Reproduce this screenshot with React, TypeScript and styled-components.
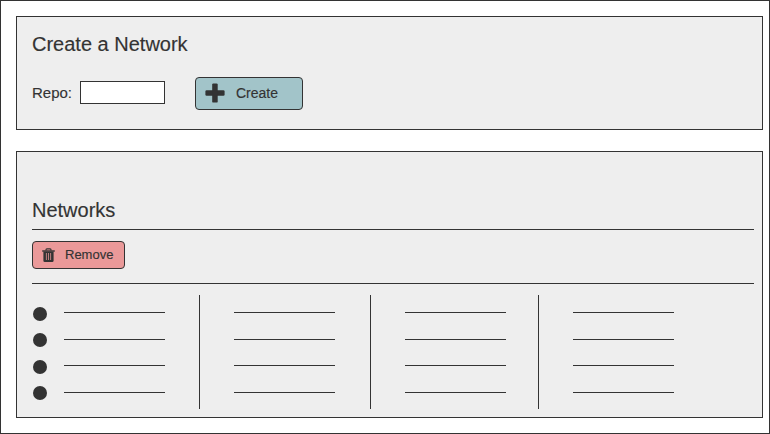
import React from "react";
import styled, { createGlobalStyle } from "styled-components";

const ink = "#333333";

const GlobalStyle = createGlobalStyle`
  *, *::before, *::after { box-sizing: border-box; }
  body { margin: 0; background: #ffffff; }
`;

const Page = styled.main`
  display: flex;
  flex-direction: column;
  gap: 21px;
  width: 770px;
  height: 434px;
  padding: 15px 6px 15px 15px;
  border: 1px solid ${ink};
  background: #ffffff;
  color: ${ink};
  font-family: "Liberation Sans", Arial, sans-serif;
  -webkit-text-stroke: 0.15px ${ink};
`;

const Panel = styled.section<{ $height: number; $top: number }>`
  flex: none;
  height: ${(p) => p.$height}px;
  padding: ${(p) => p.$top}px 8px 0 15px;
  border: 1px solid ${ink};
  background: #eeeeee;
`;

const Title = styled.h2`
  margin: 0;
  font-size: 20px;
  font-weight: 400;
  line-height: 24px;
`;

const Form = styled.form`
  display: flex;
  align-items: center;
  height: 33px;
  margin-top: 21px;
`;

const Label = styled.label`
  width: 48px;
  padding-bottom: 2px;
  font-size: 15px;
  line-height: 18px;
`;

const TextInput = styled.input`
  width: 85px;
  height: 23px;
  margin: 0 30px 2px 0;
  padding: 0 4px;
  border: 1px solid ${ink};
  border-radius: 0;
  outline: none;
  background: #ffffff;
  font: inherit;
`;

const Button = styled.button<{ $tone: "create" | "remove" }>`
  display: flex;
  align-items: center;
  width: ${(p) => (p.$tone === "create" ? 108 : 93)}px;
  height: ${(p) => (p.$tone === "create" ? 33 : 28)}px;
  gap: ${(p) => (p.$tone === "create" ? 11 : 10)}px;
  padding: 0 0 ${(p) => (p.$tone === "create" ? 2 : 0)}px 9px;
  border: 1px solid ${ink};
  border-radius: 4px;
  background: ${(p) => (p.$tone === "create" ? "#a2c4c9" : "#ea9999")};
  color: ${ink};
  font-family: inherit;
  font-size: ${(p) => (p.$tone === "create" ? 14 : 13)}px;
  line-height: 16px;
  -webkit-text-stroke: inherit;
`;

const Rule = styled.hr<{ $gap?: number }>`
  height: 1px;
  margin: ${(p) => p.$gap ?? 0}px 0 0;
  border: 0;
  background: ${ink};
`;

const Toolbar = styled.div`
  padding: 11px 0 14px;
`;

const Table = styled.div`
  display: grid;
  grid-template-columns: 168px 171px 168px 1fr;
  height: 114px;
  margin-top: 11px;
`;

const Column = styled.div`
  display: flex;
  border-right: 1px solid ${ink};
  &:last-child { border-right: 0; }
`;

const Dots = styled.div`
  display: grid;
  grid-template-rows: 26px 27px 26px 14px;
  width: 31px;
  padding: 12px 0 0 1px;
`;

const Dot = styled.span`
  width: 14px;
  height: 14px;
  border-radius: 50%;
  background: ${ink};
`;

const Lines = styled.div<{ $indent: number }>`
  display: grid;
  grid-template-rows: 27px 26px 27px 1px;
  align-content: start;
  padding: 17px 0 0 ${(p) => p.$indent}px;
`;

const Line = styled.span`
  width: 101px;
  height: 1px;
  background: ${ink};
`;

const PlusIcon = () => (
  <svg width="20" height="20" viewBox="0 0 20 20" fill={ink} aria-hidden="true">
    <rect x="0.4" y="7.2" width="19.2" height="5.5" rx="1.2" />
    <rect x="7.2" y="0.4" width="5.5" height="19.2" rx="1.2" />
  </svg>
);

const TrashIcon = () => (
  <svg width="13" height="14" viewBox="0 0 13 14" fill="none" aria-hidden="true">
    <path d="M4 2.6V1.7Q4 0.8 4.9 0.8H8.1Q9 0.8 9 1.7V2.6" stroke={ink} strokeWidth="1.2" />
    <path d="M0.2 2.3H12.8V3.7H0.2Z" fill={ink} />
    <path d="M1.4 3.5H11.6V12.4Q11.6 13.9 10.3 13.9H2.7Q1.4 13.9 1.4 12.4Z" fill={ink} />
    <path d="M4.4 5V12M6.5 5V12M8.6 5V12" stroke="#ea9999" strokeWidth="0.75" />
  </svg>
);

const rows = [0, 1, 2, 3];
const columns = [0, 1, 2, 3];

export default function App() {
  return (
    <>
      <GlobalStyle />
      <Page>
        <Panel $height={114} $top={15}>
          <Title>Create a Network</Title>
          <Form onSubmit={(e) => e.preventDefault()}>
            <Label htmlFor="repo">Repo:</Label>
            <TextInput id="repo" />
            <Button type="submit" $tone="create">
              <PlusIcon />
              Create
            </Button>
          </Form>
        </Panel>
        <Panel $height={267} $top={46}>
          <Title>Networks</Title>
          <Rule $gap={7} />
          <Toolbar>
            <Button type="button" $tone="remove">
              <TrashIcon />
              Remove
            </Button>
          </Toolbar>
          <Rule />
          <Table>
            {columns.map((column) => (
              <Column key={column}>
                {column === 0 && (
                  <Dots>
                    {rows.map((row) => (
                      <Dot key={row} />
                    ))}
                  </Dots>
                )}
                <Lines $indent={column === 0 ? 1 : 34}>
                  {rows.map((row) => (
                    <Line key={row} />
                  ))}
                </Lines>
              </Column>
            ))}
          </Table>
        </Panel>
      </Page>
    </>
  );
}
